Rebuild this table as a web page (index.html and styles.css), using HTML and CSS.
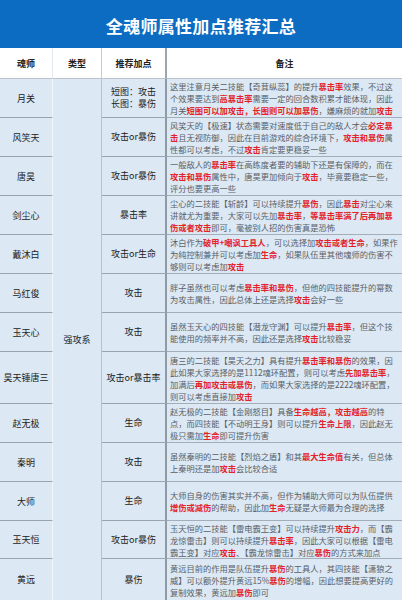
FILE: index.html
```html
<!DOCTYPE html>
<html lang="zh">
<head>
<meta charset="utf-8">
<link rel="stylesheet" href="styles.css">
</head>
<body>
<div class="page">
  <div class="title">全魂师属性加点推荐汇总</div>
  <div class="table">
    <div class="th c1">魂师</div>
    <div class="th c2">类型</div>
    <div class="th c3">推荐加点</div>
    <div class="th c4">备注</div>

    <div class="type">强攻系</div>

    <div class="name">月关</div>
    <div class="pt">短图：攻击<br>长图：暴伤</div>
    <div class="note"><p>这里注意月关二技能【奇茸纵蕊】的提升<span class="r">暴击率</span>效果，不过这个效果要达到<span class="r">高暴击率</span>需要一定的回合数积累才能体现，因此月关<span class="r">短图可以加攻击，长图则可以加暴伤</span>，嫌麻烦的就加<span class="r">攻击</span></p></div>

    <div class="name">风笑天</div>
    <div class="pt">攻击or暴伤</div>
    <div class="note"><p>风笑天的【极速】状态需要对速度低于自己的敌人才会<span class="r">必定暴击</span>且无视防御，因此在目前游戏的综合环境下，<span class="r">攻击和暴伤</span>属性都可以考虑，不过<span class="r">攻击</span>肯定要更稳妥一些</p></div>

    <div class="name">唐昊</div>
    <div class="pt">攻击or暴伤</div>
    <div class="note"><p>一般敌人的<span class="r">暴击率</span>在高练度者要的辅助下还是有保障的，而在<span class="r">攻击和暴伤</span>属性中，唐昊更加倾向于<span class="r">攻击</span>，毕竟要稳定一些，评分也要更高一些</p></div>

    <div class="name">剑尘心</div>
    <div class="pt">暴击率</div>
    <div class="note"><p>尘心的二技能【斩龄】可以持续提升<span class="r">暴伤</span>，因此<span class="r">暴击</span>对尘心来讲就尤为重要，大家可以先加<span class="r">暴击率</span>，<span class="r">等暴击率满了后再加暴伤或者攻击</span>即可，毫被别人招的伤害真是恐怖</p></div>

    <div class="name">戴沐白</div>
    <div class="pt">攻击or生命</div>
    <div class="note"><p>沐白作为<span class="r">破甲+嘲讽工具人</span>，可以选择加<span class="r">攻击或者生命</span>，如果作为纯控制兼并可以考虑加<span class="r">生命</span>，如果队伍里其他魂师的伤害不够则可以考虑加<span class="r">攻击</span></p></div>

    <div class="name">马红俊</div>
    <div class="pt">攻击</div>
    <div class="note"><p>胖子虽然也可以考虑<span class="r">暴击率和暴伤</span>，但他的四技能提升的幂数为攻击属性，因此总体上还是选择<span class="r">攻击</span>会好一些</p></div>

    <div class="name">玉天心</div>
    <div class="pt">攻击</div>
    <div class="note"><p>虽然玉天心的四技能【潜龙守渊】可以提升<span class="r">暴击率</span>，但这个技能使用的频率并不高，因此还是选择<span class="r">攻击</span>比较稳妥</p></div>

    <div class="name">昊天锤唐三</div>
    <div class="pt">攻击or暴击率</div>
    <div class="note"><p>唐三的二技能【昊天之力】具有提升<span class="r">暴击率和暴伤</span>的效果，因此如果大家选择的是1112魂环配置，则可以考虑<span class="r">先加暴击率</span>，加满后<span class="r">再加攻击或暴伤</span>，而如果大家选择的是2222魂环配置，则可以考虑直接加<span class="r">攻击</span></p></div>

    <div class="name">赵无极</div>
    <div class="pt">生命</div>
    <div class="note"><p>赵无极的二技能【金刚怒目】具备<span class="r">生命越高，攻击越高</span>的特点，而四技能【不动明王身】则可以提升<span class="r">生命上限</span>，因此赵无极只需加<span class="r">生命</span>即可提升伤害</p></div>

    <div class="name">秦明</div>
    <div class="pt">攻击</div>
    <div class="note"><p>虽然秦明的二技能【烈焰之盾】和其<span class="r">最大生命值</span>有关，但总体上秦明还是加<span class="r">攻击</span>会比较合适</p></div>

    <div class="name">大师</div>
    <div class="pt">生命</div>
    <div class="note"><p>大师自身的伤害其实并不高，但作为辅助大师可以为队伍提供<span class="r">增伤或减伤</span>的帮助，因此加<span class="r">生命</span>无疑是大师最为合理的选择</p></div>

    <div class="name">玉天恒</div>
    <div class="pt">攻击or暴伤</div>
    <div class="note"><p>玉天恒的二技能【雷电霸王变】可以持续提升<span class="r">攻击力</span>，而【霸龙惊雷击】则可以持续提升<span class="r">暴击率</span>，因此大家可以根据【雷电霸王变】对应<span class="r">攻击</span>、【霸龙惊雷击】对应<span class="r">暴伤</span>的方式来加点</p></div>

    <div class="name last">黄远</div>
    <div class="pt last">暴伤</div>
    <div class="note last"><p>黄远目前的作用是队伍提升<span class="r">暴伤</span>的工具人，其四技能【潇狼之威】可以额外提升黄远15%<span class="r">暴伤</span>的增幅，因此想要提高更好的复制效果，黄远加<span class="r">暴伤</span>即可</p></div>
  </div>
</div>
</body>
</html>
```

FILE: styles.css
```css
html, body {
  margin: 0;
  padding: 0;
}
body {
  width: 402px;
  height: 600px;
  overflow: hidden;
  background: #dce8f4;
  font-family: "Noto Sans CJK SC", "Noto Sans", sans-serif;
  color: #333;
}
.page {
  width: 402px;
}
.title {
  height: 48px;
  background: #0b6cc1;
  color: #fff;
  font-size: 17px;
  font-weight: bold;
  display: flex;
  align-items: center;
  justify-content: center;
  padding-top: 2px;
  box-sizing: border-box;
  letter-spacing: 0.3px;
}
.table {
  display: grid;
  grid-template-columns: 53px 49px 65px 1fr;
  grid-template-rows: 31px 39px 39px 39px 39px 39px 39px 39px 52px 39px 39px 39px 38px 41px;
}
.table > div {
  box-sizing: border-box;
  display: flex;
  align-items: center;
  justify-content: center;
  text-align: center;
  overflow: hidden;
}
.th {
  background: #fff;
  font-size: 9px;
  font-weight: bold;
  color: #222;
  border-bottom: 1px solid #b9c3cc;
}
.th.c1 { border-right: 1px solid #e4e9ee; }
.th.c2 { border-right: 1px solid #c4ccd4; }
.th.c3 { border-right: 2px solid #9aa6b1; }
.type {
  grid-column: 2;
  grid-row: 2 / -1;
  font-size: 9px;
  color: #222;
  border-right: 1px solid #b5c1cc;
}
.name {
  grid-column: 1;
  font-size: 9px;
  color: #222;
  border-bottom: 1px solid #98a5b1;
  border-right: 1px solid #f2f6fa;
}
.pt {
  grid-column: 3;
  font-size: 9px;
  color: #222;
  line-height: 12px;
  border-bottom: 1px solid #98a5b1;
  border-right: 2px solid #8e9ba7;
}
.table > .note {
  grid-column: 4;
  justify-content: flex-start;
  text-align: left;
  border-bottom: 1px solid #a3aeb9;
  padding: 0 2px 0 3px;
}
.note p {
  margin: 0;
  font-size: 8.25px;
  line-height: 12px;
  color: #5a5f66;
}
.table > .last {
  border-bottom: none;
}
.r {
  color: #e3232a;
  font-weight: bold;
}
```
